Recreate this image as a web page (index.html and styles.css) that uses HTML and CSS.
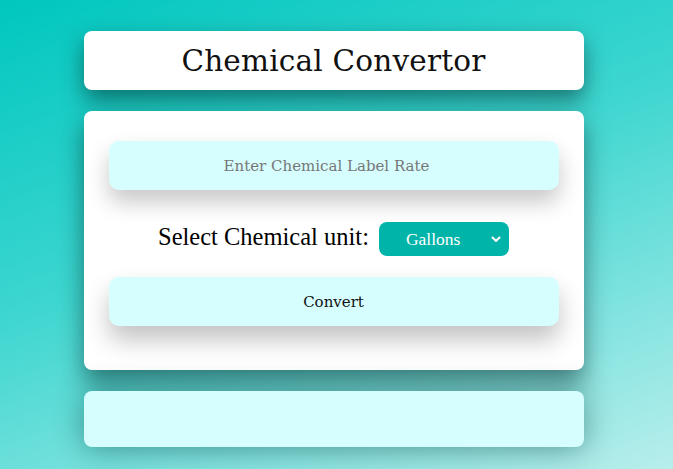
FILE: index.html
```html
<!DOCTYPE html>
<html>
<head>
<meta charset="utf-8">
<link rel="stylesheet" href="styles.css">
</head>
<body>
<div class="page">
  <header class="card title-card">
    <h1 class="title">Chemical Convertor</h1>
  </header>
  <main class="card form-card">
    <input class="field" type="text" placeholder="Enter Chemical Label Rate">
    <div class="unit-row">
      <label class="unit-label" for="unit">Select Chemical unit:</label>
      <div class="select-wrap">
        <select id="unit" class="unit-select">
          <option>Gallons</option>
        </select>
        <svg class="chevron" width="10" height="7" viewBox="0 0 10 7"><path d="M1.5 1.5 L5 5 L8.5 1.5" fill="none" stroke="#fff" stroke-width="2" stroke-linecap="round" stroke-linejoin="round"/></svg>
      </div>
    </div>
    <button class="btn" type="button">Convert</button>
  </main>
  <section class="card result-card"></section>
</div>
</body>
</html>
```

FILE: styles.css
```css
html, body {
  margin: 0;
  padding: 0;
  height: 100%;
}
body {
  background: linear-gradient(160deg, #00c7bf 0%, #3ed6d0 45%, #b8eeec 100%);
  font-family: "DejaVu Serif", "Liberation Serif", serif;
  overflow: hidden;
}
.page {
  width: 500px;
  margin: 0 auto;
  padding: 31px 6px 0 0;
  display: flex;
  flex-direction: column;
  gap: 21px;
  box-sizing: content-box;
}
.card {
  border-radius: 8px;
  background: #fff;
}
.title-card {
  height: 59px;
  display: flex;
  align-items: center;
  justify-content: center;
  box-shadow: 0 10px 22px rgba(0, 40, 40, 0.55);
}
.title {
  margin: 0;
  font-weight: normal;
  font-size: 29.5px;
  color: #111;
  letter-spacing: 0.2px;
}
.form-card {
  height: 259px;
  box-sizing: border-box;
  padding: 30px 25px 0;
  display: flex;
  flex-direction: column;
  box-shadow: 0 12px 24px rgba(0, 40, 40, 0.55);
}
.field {
  height: 49px;
  border: none;
  border-radius: 10px;
  background: #d6fefe;
  text-align: center;
  font-family: "DejaVu Serif", serif;
  font-size: 15px;
  color: #333;
  outline: none;
  box-shadow: 0 12px 22px rgba(0, 0, 0, 0.22);
  padding: 0 14px 0 0;
}
.field::placeholder {
  color: #777;
}
.unit-row {
  display: flex;
  align-items: center;
  justify-content: center;
  gap: 10px;
  height: 34px;
  margin-top: 32px;
}
.unit-label {
  font-family: "Liberation Serif", serif;
  font-size: 24.5px;
  color: #000;
  position: relative;
  top: -2px;
}
.select-wrap {
  position: relative;
  width: 130px;
  height: 34px;
}
.unit-select {
  appearance: none;
  -webkit-appearance: none;
  width: 100%;
  height: 100%;
  border: none;
  border-radius: 8px;
  background: #00b4a9;
  color: #fff;
  font-family: "Liberation Serif", serif;
  font-size: 17.5px;
  padding: 0 0 0 27px;
  outline: none;
}
.chevron {
  position: absolute;
  right: 8px;
  top: 14px;
  pointer-events: none;
}
.btn {
  margin-top: 21px;
  height: 49px;
  border: none;
  border-radius: 10px;
  background: #d6fefe;
  font-family: "DejaVu Serif", serif;
  font-size: 15px;
  color: #111;
  box-shadow: 0 14px 24px rgba(0, 0, 0, 0.24);
  padding: 0;
}
.result-card {
  height: 56px;
  background: #d6fefe;
  box-shadow: 0 2px 30px rgba(0, 50, 50, 0.45);
}
```
